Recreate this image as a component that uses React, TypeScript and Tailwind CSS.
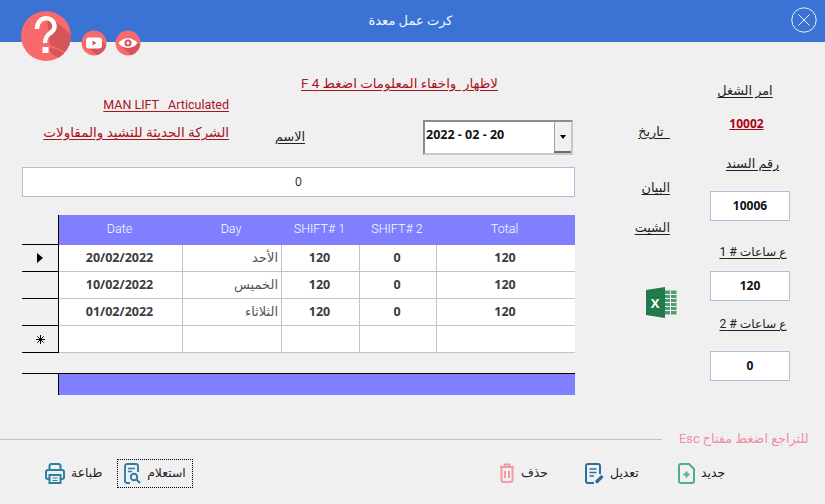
const arabic = "font-['Roboto','DejaVu_Sans',sans-serif]";

function Label({ children, className = "", size = "text-[12.8px]" }: { children: React.ReactNode; className?: string; size?: string }) {
  return (
    <span dir="rtl" className={`${size} leading-4 underline underline-offset-2 whitespace-pre text-[#222] ${className}`}>
      {children}
    </span>
  );
}

function ValueBox({ value }: { value: string }) {
  return (
    <div className="w-[80px] h-[30px] flex items-center justify-center bg-white border border-[#aebfd9] text-[12px] font-bold text-[#111] font-['Open_Sans',sans-serif]">
      {value}
    </div>
  );
}

function HelpBadge() {
  return (
    <svg viewBox="0 0 52 52" className="w-[52px] h-[52px]">
      <defs>
        <clipPath id="helpClip">
          <circle cx="26" cy="26" r="25" />
        </clipPath>
      </defs>
      <circle cx="26" cy="26" r="25" fill="#f96a6c" />
      <g clipPath="url(#helpClip)">
        <path d="M27 8 L36 12 L60 32 L60 42 L50 44 L30 35 Z" fill="#d4555a" />
        <path d="M30 37 L50 45 L44 52 L30 42 Z" fill="#d4555a" />
      </g>
      <path d="M17 19 C17 5 35 5 34.5 17 C34 24 25 22 25 33" fill="none" stroke="#fff" strokeWidth="4.4" />
      <rect x="22.5" y="37" width="6" height="6" fill="#fff" />
    </svg>
  );
}

function YoutubeBadge() {
  return (
    <svg viewBox="0 0 26 26" className="w-[26px] h-[26px]">
      <circle cx="13" cy="13" r="12.5" fill="#f96a6c" />
      <path d="M8 9 L19 9 L25 15 C24 20 20 24 16 25 L6 17 Z" fill="#d4555a" />
      <rect x="5" y="7.5" width="16" height="11" rx="3" fill="#fff" />
      <path d="M11.5 10.5 L15.5 13 L11.5 15.5 Z" fill="#d4555a" />
    </svg>
  );
}

function EyeBadge() {
  return (
    <svg viewBox="0 0 26 26" className="w-[26px] h-[26px]">
      <circle cx="13" cy="13" r="12.5" fill="#f96a6c" />
      <path d="M18 8 L25 15 C24 20 20 24 16 25 L7 17 Z" fill="#d4555a" />
      <path d="M3.5 13 C8 6.5 18 6.5 22.5 13 C18 19.5 8 19.5 3.5 13 Z" fill="#fff" />
      <circle cx="13" cy="13" r="3.6" fill="#d4555a" />
      <circle cx="13" cy="13" r="1.6" fill="#fff" />
    </svg>
  );
}

function ExcelIcon() {
  return (
    <svg viewBox="0 0 31 31" className="w-[31px] h-[31px]">
      <path d="M0 3 L19 0 L19 31 L0 28 Z" fill="#217a4b" />
      <rect x="19" y="3.5" width="11.5" height="24" fill="#4f9c72" />
      <path d="M19 7.5 H30.5 M19 11.5 H30.5 M19 15.5 H30.5 M19 19.5 H30.5 M19 23.5 H30.5 M24.5 3.5 V27.5" stroke="#eef5f0" strokeWidth="1" />
      <text x="9" y="21" textAnchor="middle" fontSize="13" fontWeight="700" fill="#fff" fontFamily="Open Sans">X</text>
    </svg>
  );
}

function NewIcon() {
  return (
    <svg viewBox="0 0 17 21" fill="none" className="w-[17px] h-[21px]" stroke="#4fae8a" strokeWidth="2">
      <path d="M3 1 H11 L16 6 V18 A2 2 0 0 1 14 20 H3 A2 2 0 0 1 1 18 V3 A2 2 0 0 1 3 1 Z" />
      <path d="M8.5 8.5 V14.5 M5.5 11.5 H11.5" />
    </svg>
  );
}

function EditIcon() {
  return (
    <svg viewBox="0 0 19 21" fill="none" className="w-[19px] h-[21px]" stroke="#2a6f9e" strokeWidth="2">
      <path d="M9 20 H3 A2 2 0 0 1 1 18 V3 A2 2 0 0 1 3 1 H13 A2 2 0 0 1 15 3 V11" />
      <path d="M4.5 6 H11.5 M4.5 9.5 H11.5 M4.5 13 H9" strokeWidth="1.6" />
      <path d="M11 19.5 L17.5 13" strokeWidth="3.2" />
    </svg>
  );
}

function TrashIcon() {
  return (
    <svg viewBox="0 0 16 20" fill="none" className="w-[16px] h-[20px]" stroke="#f59aa4" strokeWidth="2">
      <path d="M1 4 H15 M5.5 4 V1.5 H10.5 V4" />
      <path d="M2.5 4 V17 A2 2 0 0 0 4.5 19 H11.5 A2 2 0 0 0 13.5 17 V4" />
      <path d="M6 8 V15 M10 8 V15" />
    </svg>
  );
}

function QueryIcon() {
  return (
    <svg viewBox="0 0 17 21" fill="none" className="w-[17px] h-[21px]" stroke="#2f7ea3" strokeWidth="1.9">
      <path d="M6 20 H3 A2 2 0 0 1 1 18 V3 A2 2 0 0 1 3 1 H12 A2 2 0 0 1 14 3 V9" />
      <path d="M4 5.5 H11 M4 8.5 H8" strokeWidth="1.5" />
      <circle cx="10" cy="14" r="3.2" />
      <path d="M12.5 16.5 L16 20" strokeWidth="2.2" />
    </svg>
  );
}

function PrintIcon() {
  return (
    <svg viewBox="0 0 20 21" fill="none" className="w-[20px] h-[21px]" stroke="#2f7ea3" strokeWidth="2">
      <path d="M4.5 7 V3 A2 2 0 0 1 6.5 1 H13.5 A2 2 0 0 1 15.5 3 V7" />
      <path d="M4.5 16 H3 A2 2 0 0 1 1 14 V9 A2 2 0 0 1 3 7 H17 A2 2 0 0 1 19 9 V14 A2 2 0 0 1 17 16 H15.5" />
      <path d="M4.5 12 H15.5 V20 H4.5 Z" />
      <path d="M7.5 15 H12.5 M7.5 17.5 H12.5" strokeWidth="1.2" />
    </svg>
  );
}

// new-record marker of the grid
function RowStar() {
  return (
    <svg viewBox="0 0 9 9" className="w-[9px] h-[9px]" stroke="#000" strokeWidth="1">
      <path d="M4.5 0 V9 M0 4.5 H9 M1.3 1.3 L7.7 7.7 M7.7 1.3 L1.3 7.7" />
    </svg>
  );
}

const gridCols = "grid grid-cols-[37px_124px_99px_78px_77px_138px]";

const rows = [
  { date: "20/02/2022", day: "الأحد", s1: "120", s2: "0", total: "120", mark: "arrow" },
  { date: "10/02/2022", day: "الخميس", s1: "120", s2: "0", total: "120", mark: "" },
  { date: "01/02/2022", day: "الثلاثاء", s1: "120", s2: "0", total: "120", mark: "" },
  { date: "", day: "", s1: "", s2: "", total: "", mark: "star" },
];

function DataGrid() {
  const cell = "flex items-center justify-center pr-[2px] bg-white border-r border-b border-[#c4c4c4] text-[12.5px] font-bold text-[#3c3c3c] font-['Open_Sans',sans-serif]";
  const dayCell = "flex items-center justify-start pr-[3px] bg-white border-r border-b border-[#c4c4c4] text-[13px] text-[#555]";
  return (
    <div className="w-[553px]">
      <div className={`${gridCols} h-[30px]`}>
        <div className="border-r border-b border-black bg-[#f0f0f0]" />
        {["Date", "Day", "SHIFT# 1", "SHIFT# 2", "Total"].map((h) => (
          <div key={h} className="flex items-center justify-center pr-[3px] pb-px bg-[#7f7fff] text-[12.5px] font-light text-white font-['Roboto',sans-serif]">
            {h}
          </div>
        ))}
      </div>
      {rows.map((r, i) => (
        <div key={i} className={`${gridCols} h-[27px]`}>
          <div className="flex items-center justify-center border-r border-b border-black">
            {r.mark === "arrow" && <div className="w-0 h-0 border-y-[5px] border-y-transparent border-l-[6px] border-l-black" />}
            {r.mark === "star" && <RowStar />}
          </div>
          <div className={cell}>{r.date}</div>
          <div className={dayCell} dir="rtl">{r.day}</div>
          <div className={cell}>{r.s1}</div>
          <div className={cell}>{r.s2}</div>
          <div className={`${cell} border-r-0`}>{r.total}</div>
        </div>
      ))}
      <div className={`${gridCols} h-[22px] mt-[20px] border-t border-black`}>
        <div className="border-r border-black" />
        <div className="col-span-5 bg-[#7f7fff]" />
      </div>
    </div>
  );
}

function FooterButton({ icon, label, className = "" }: { icon: React.ReactNode; label: string; className?: string }) {
  return (
    <div className={`flex items-center gap-[6px] ${className}`}>
      <div className="shrink-0 flex">{icon}</div>
      <span className="text-[12.4px] text-[#222] whitespace-nowrap">{label}</span>
    </div>
  );
}

export default function App() {
  return (
    <div className={`relative w-[825px] h-[504px] overflow-hidden bg-[#f0f0f0] ${arabic}`}>
      {/* HEADER */}
      <div className="relative h-[42px] bg-[#3a73d4] flex items-center justify-center">
        <span className="text-[13px] text-[#f2f6fd] ml-[-4px]">كرت عمل معدة</span>
        <svg viewBox="0 0 26 26" fill="none" className="absolute right-[8px] top-[7px] w-[26px] h-[26px]" stroke="#e8effa" strokeWidth="1">
          <circle cx="13" cy="13" r="12.2" />
          <path d="M7.5 7.5 L18.5 18.5 M18.5 7.5 L7.5 18.5" />
        </svg>
      </div>

      {/* BADGES over the header edge */}
      <div className="absolute left-[20px] top-[10px]"><HelpBadge /></div>
      <div className="absolute left-[81px] top-[30px]"><YoutubeBadge /></div>
      <div className="absolute left-[115px] top-[30px]"><EyeBadge /></div>

      {/* BODY */}
      <div className="flex h-[389px]">
        {/* LEFT */}
        <div className="w-[575px] pl-[22px] pt-[34px]">
          <div className="flex justify-end pr-[77px] h-4">
            <span dir="rtl" className="text-[13.4px] leading-4 underline underline-offset-2 whitespace-pre text-[#a8141f]">
              لاظهار  واخفاء المعلومات اضغط F 4
            </span>
          </div>
          <div className="w-[207px] h-4 text-right">
            <span className="text-[12.5px] leading-4 underline underline-offset-2 whitespace-pre text-[#a8141f]">MAN LIFT   Articulated</span>
          </div>

          <div className="flex h-[35px] mt-3">
            <div className="w-[207px] text-right">
              <span dir="rtl" className="text-[13.5px] leading-6 underline underline-offset-2 whitespace-nowrap text-[#a8141f]">
                الشركة الحديثة للتشيد والمقاولات
              </span>
            </div>
            <div className="w-[76px] pt-[4px] text-right">
              <Label>الاسم</Label>
            </div>
            <div className="ml-[118px] w-[150px] h-[35px] flex bg-white border-2 border-[#8c8c8c] border-r-[#c8c8c8] border-b-[#c8c8c8]">
              <span className="flex-1 pl-[1px] pt-[4px] text-[12.5px] font-bold text-[#111] font-['Open_Sans',sans-serif] whitespace-pre">2022 - 02 - 20</span>
              <div className="w-[17px] flex items-center justify-center bg-[#f0f0f0] border-l border-[#a0a0a0] border-b-2 border-b-[#6e6e6e]">
                <div className="w-0 h-0 border-x-[3.5px] border-x-transparent border-t-[4px] border-t-black" />
              </div>
            </div>
          </div>

          <div className="mt-3 w-[553px] h-[30px] flex items-center justify-center bg-white border border-[#aebfd9] text-[12px] text-[#222] font-['Open_Sans',sans-serif]">
            0
          </div>

          <div className="mt-[18px]">
            <DataGrid />
          </div>
        </div>

        {/* MIDDLE */}
        <div className="w-[95px] pt-[82px] flex flex-col items-end">
          <Label className="h-4">  تاريخ</Label>
          <Label className="h-4 mt-10">البيان</Label>
          <Label className="h-4 mt-6">الشيت</Label>
          <div className="mt-[51px] w-[31px] mr-[-7px]"><ExcelIcon /></div>
        </div>

        {/* RIGHT */}
        <div className="ml-[40px] w-[80px] pt-[41px] flex flex-col items-center">
          <Label className="h-4 ml-[-10px]">امر الشغل</Label>
          <span className="h-4 mt-[17px] ml-[-7px] text-[12px] leading-4 font-bold underline text-[#b00014] font-['Open_Sans',sans-serif]">10002</span>
          <Label className="h-4 mt-6 ml-[5px]">رقم السند</Label>
          <div className="mt-[19px]"><ValueBox value="10006" /></div>
          <Label size="text-[12.2px]" className="h-4 mt-[23px] ml-[6px]">ع ساعات # 1</Label>
          <div className="mt-[11px]"><ValueBox value="120" /></div>
          <Label size="text-[12.2px]" className="h-4 mt-[15px] ml-[6px]">ع ساعات # 2</Label>
          <div className="mt-[19px]"><ValueBox value="0" /></div>
        </div>
      </div>

      {/* ESC HINT + DIVIDER */}
      <div className="flex items-center h-4">
        <div className="w-[662px] h-px bg-[#c4c4c4]" />
        <span dir="rtl" className="ml-[17px] text-[12.8px] leading-4 text-[#ee8fa3] whitespace-nowrap">للتراجع اضغط مفتاح Esc</span>
      </div>

      {/* BUTTONS */}
      <div className="flex items-center h-[30px] mt-[11px] pl-[45px]">
        <FooterButton icon={<PrintIcon />} label="طباعة" className="gap-[4px] w-[55px]" />
        <FooterButton
          icon={<QueryIcon />}
          label="استعلام"
          className="ml-[17px] w-[76px] h-[29px] justify-center border border-dotted border-black"
        />
        <FooterButton icon={<TrashIcon />} label="حذف" className="ml-[306px] w-[47px]" />
        <FooterButton icon={<EditIcon />} label="تعديل" className="ml-[39px] w-[54px]" />
        <FooterButton icon={<NewIcon />} label="جديد" className="ml-[39px]" />
      </div>
    </div>
  );
}
